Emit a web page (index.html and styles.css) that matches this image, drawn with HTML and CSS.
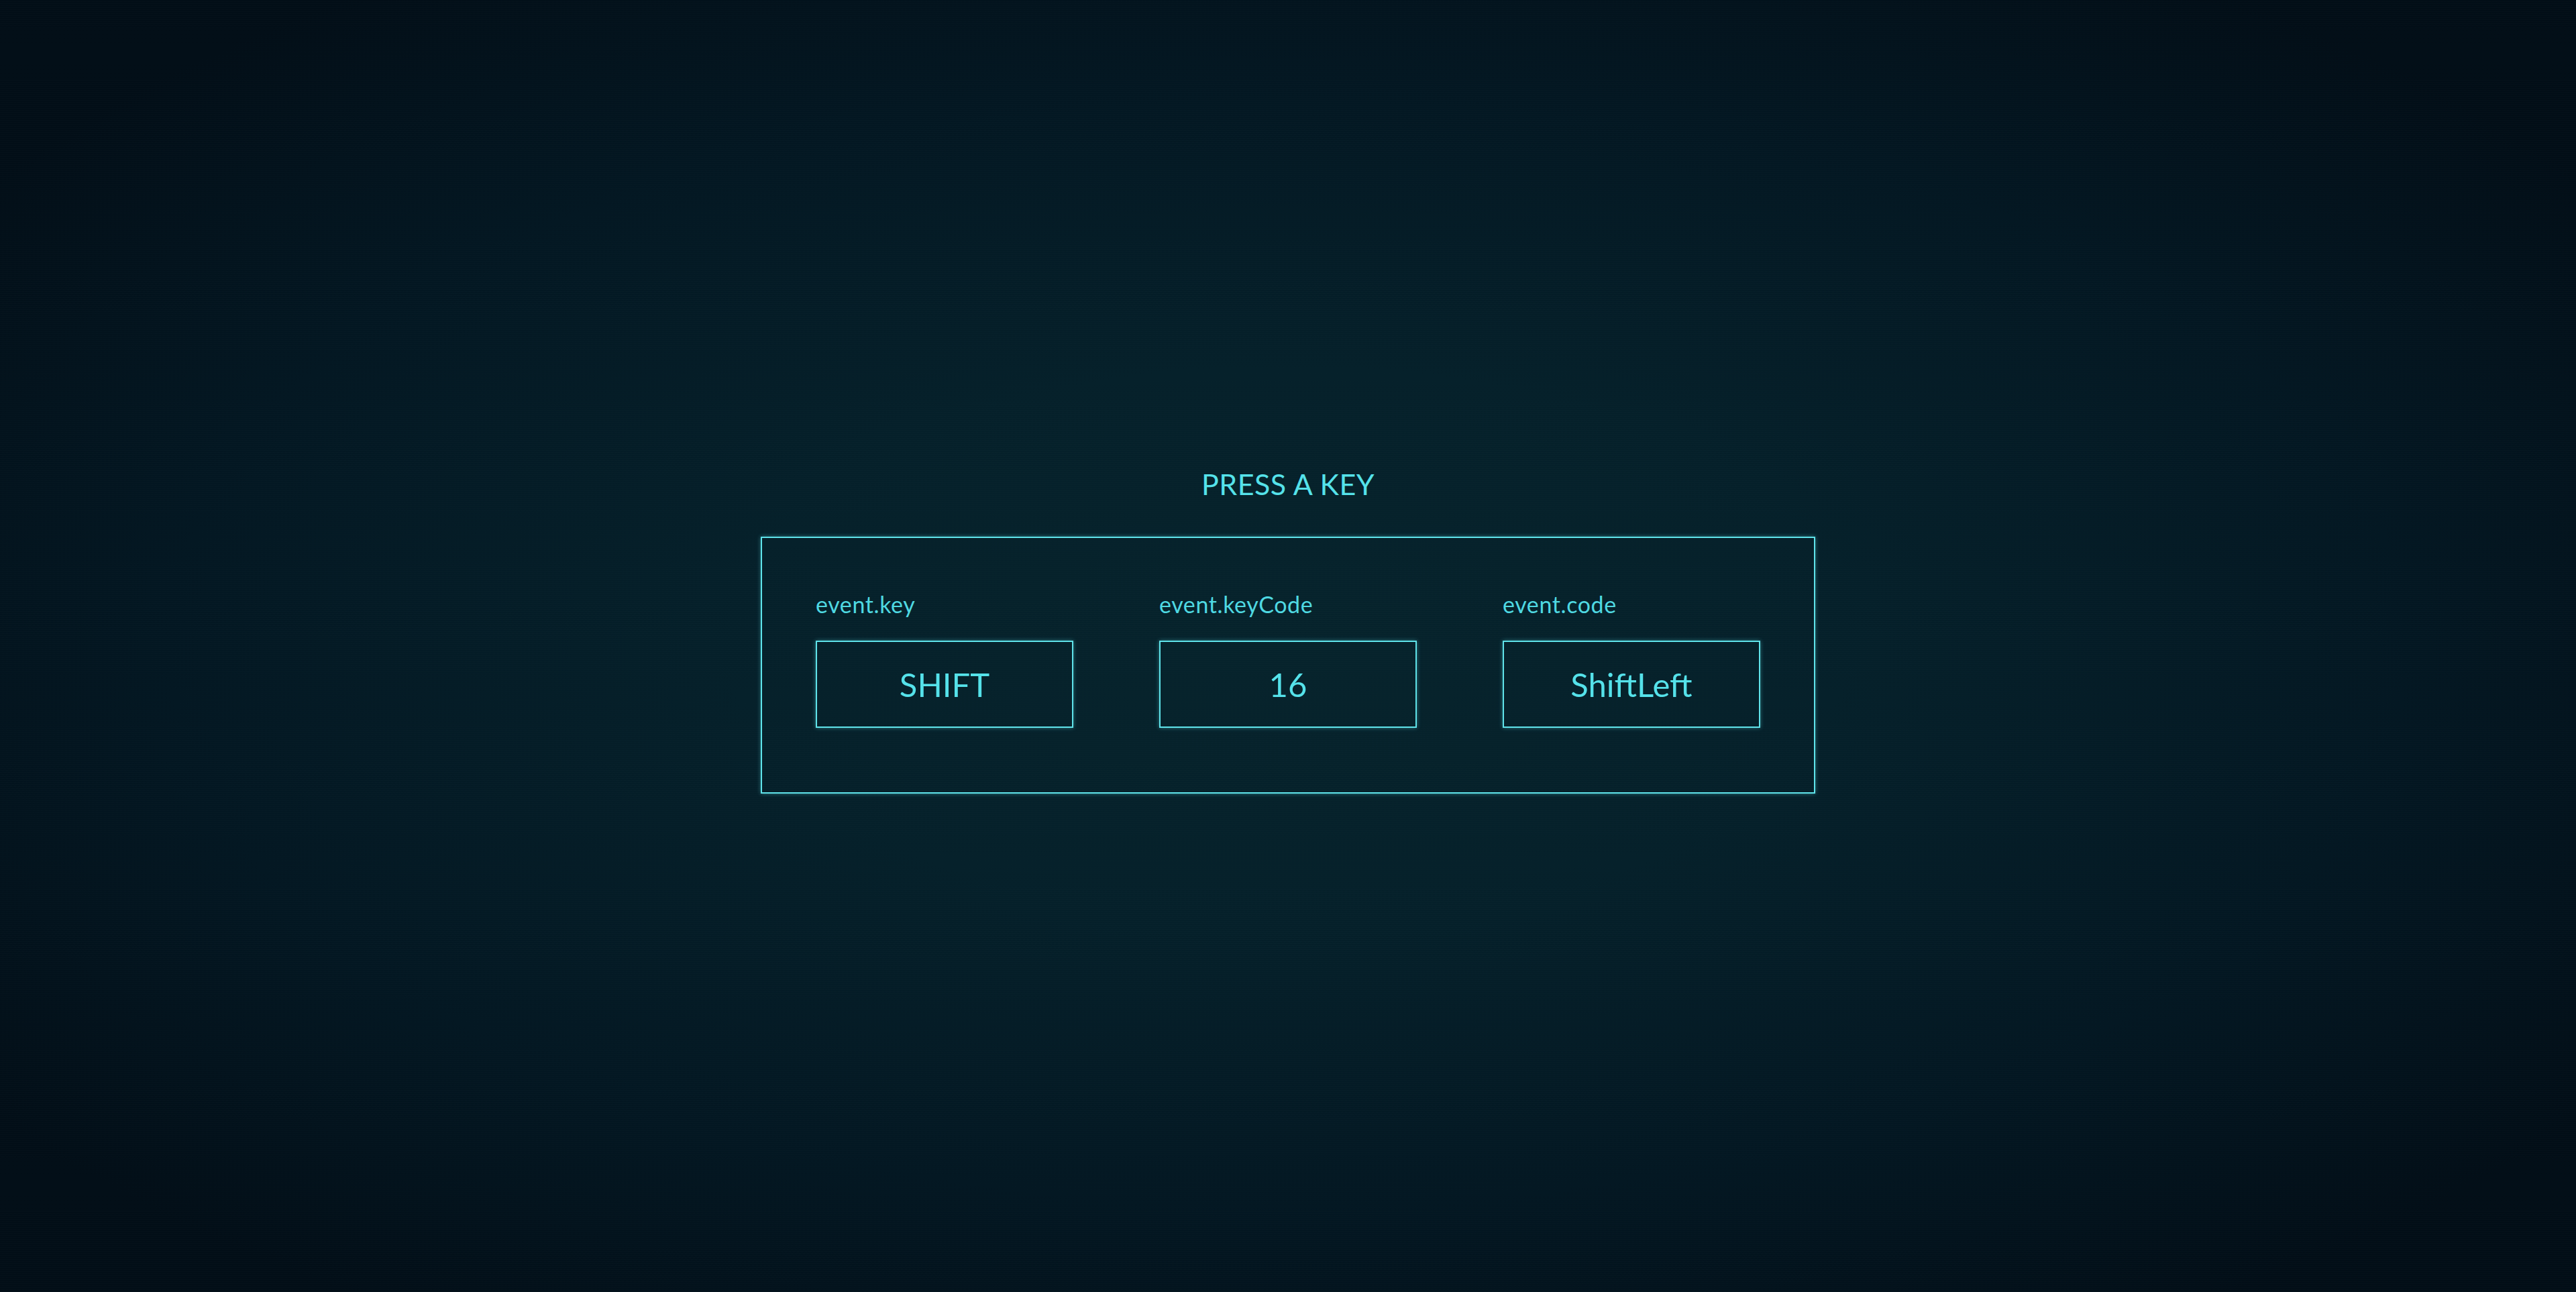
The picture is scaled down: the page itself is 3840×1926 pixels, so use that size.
FILE: index.html
```html
<!DOCTYPE html>
<html lang="en">
<head>
<meta charset="utf-8">
<title>Press a key</title>
<link rel="stylesheet" href="styles.css">
</head>
<body>
<main class="stage">
  <h1 class="title">PRESS A KEY</h1>
  <section class="panel">
    <div class="field">
      <div class="label">event.key</div>
      <div class="value">SHIFT</div>
    </div>
    <div class="field">
      <div class="label">event.keyCode</div>
      <div class="value">16</div>
    </div>
    <div class="field">
      <div class="label">event.code</div>
      <div class="value">ShiftLeft</div>
    </div>
  </section>
</main>
</body>
</html>
```

FILE: styles.css
```css
html, body {
  margin: 0;
  padding: 0;
  height: 100%;
}

body {
  font-family: "Lato", "Roboto", sans-serif;
  color: #52dfe7;
  background-color: #020e17;
  background-image:
    repeating-linear-gradient(0deg, rgba(255, 255, 255, 0.012) 0 1px, transparent 1px 3px),
    radial-gradient(ellipse 62% 62% at 50% 50%, #06232c 0%, #05202a 35%, #031722 70%, #020e17 100%);
}

.stage {
  min-height: 100vh;
  box-sizing: border-box;
  display: flex;
  flex-direction: column;
  align-items: center;
  justify-content: center;
  padding-bottom: 48px;
}

.title {
  margin: 0 0 52px;
  font-weight: 400;
  font-size: 43px;
  line-height: 52px;
  letter-spacing: 0.5px;
  color: #55e2ea;
}

.panel {
  display: flex;
  gap: 128px;
  padding: 78px 80px 96px;
  border: 2px solid #5fe3ea;
  box-shadow: 0 0 6px rgba(95, 227, 234, 0.45);
}

.field {
  display: flex;
  flex-direction: column;
  width: 384px;
}

.label {
  font-size: 34px;
  line-height: 42px;
  margin-bottom: 33px;
  letter-spacing: 0.6px;
  color: #4fd9e2;
}

.value {
  box-sizing: border-box;
  height: 130px;
  border: 2px solid #5fe3ea;
  box-shadow: 0 0 6px rgba(95, 227, 234, 0.45);
  display: flex;
  align-items: center;
  justify-content: center;
  font-size: 49px;
  color: #55e2ea;
}
```
